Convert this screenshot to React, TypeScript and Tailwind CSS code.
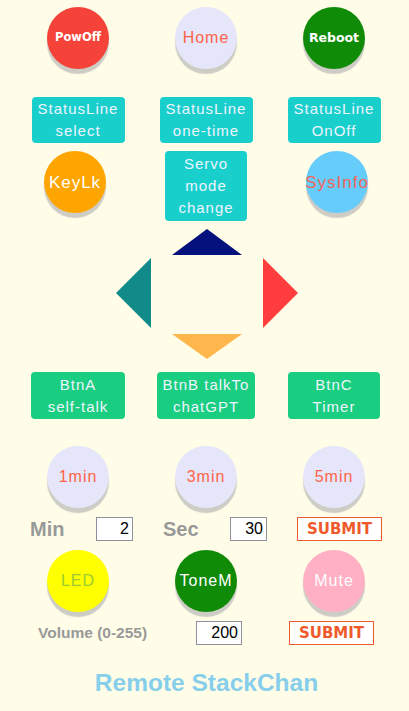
import React from "react";

const sans = "font-['Liberation_Sans',Arial,sans-serif]";
const dejavu = "font-['DejaVu_Sans',Verdana,sans-serif]";

type CircleProps = {
  label: string;
  className: string;
  textClass: string;
};

function Circle({ label, className, textClass }: CircleProps) {
  return (
    <div
      className={`flex h-[62px] w-[62px] items-center justify-center rounded-full shadow-[0_5px_1px_#cdcdc6] ${className}`}
    >
      <span className={`whitespace-nowrap leading-none ${textClass}`}>{label}</span>
    </div>
  );
}

function Box({ lines, className }: { lines: string[]; className: string }) {
  return (
    <div
      className={`flex flex-col items-center justify-center rounded-[4px] ${sans} text-[15px] leading-[22px] tracking-[1px] text-[#eef4ff] ${className}`}
    >
      {lines.map((l) => (
        <span key={l} className="whitespace-nowrap">
          {l}
        </span>
      ))}
    </div>
  );
}

function NumInput({ value, width }: { value: string; width: string }) {
  return (
    <input
      readOnly
      value={value}
      className={`h-[24px] ${width} border border-[#8f8f9d] bg-white px-[3px] text-right ${sans} text-[16px] text-black outline-none`}
    />
  );
}

function Submit() {
  return (
    <button
      className={`flex h-[24px] w-[85px] items-center justify-center border border-[#ee5a2b] bg-white ${dejavu} text-[15px] font-bold text-[#ee5a2b]`}
    >
      SUBMIT
    </button>
  );
}

function Tri({ w, h, points, color }: { w: number; h: number; points: string; color: string }) {
  return (
    <svg width={w} height={h} viewBox={`0 0 ${w} ${h}`} className="block">
      <polygon points={points} fill={color} />
    </svg>
  );
}

export default function App() {
  const light = `${sans} text-[16px] tracking-[1px]`;
  return (
    <div className="min-h-[711px] w-full bg-[#fffde8]">
      <div className="ml-[14px] w-[384px]">
        {/* row 1 */}
        <div className="grid grid-cols-3 justify-items-center pt-[7px]">
          <Circle
            label="PowOff"
            className="bg-[#f5433a]"
            textClass={`${dejavu} text-[11.5px] font-bold text-white`}
          />
          <Circle label="Home" className="bg-[#e6e6fa]" textClass={`${light} text-[#ff6347]`} />
          <Circle
            label="Reboot"
            className="bg-[#108b08]"
            textClass={`${dejavu} text-[12.5px] font-bold text-white`}
          />
        </div>

        {/* status line */}
        <div className="mt-[28px] grid grid-cols-3 justify-items-center">
          <Box lines={["StatusLine", "select"]} className="h-[46px] w-[93px] bg-[#18cfcc]" />
          <Box lines={["StatusLine", "one-time"]} className="h-[46px] w-[93px] bg-[#18cfcc]" />
          <Box lines={["StatusLine", "OnOff"]} className="h-[46px] w-[93px] bg-[#18cfcc]" />
        </div>

        {/* row 3 */}
        <div className="mt-[8px] grid grid-cols-3 items-start justify-items-center">
          <div className="mr-[6px]">
            <Circle
              label="KeyLk"
              className="bg-[#ffa500]"
              textClass={`${sans} text-[17px] tracking-[1px] text-white`}
            />
          </div>
          <Box lines={["Servo", "mode", "change"]} className="h-[70px] w-[82px] bg-[#18cfcc]" />
          <div className="ml-[6px]">
            <Circle
              label="SysInfo"
              className="bg-[#66ccfa]"
              textClass={`${sans} text-[17px] tracking-[1px] text-[#f2665a]`}
            />
          </div>
        </div>
      </div>

      {/* direction pad */}
      <div className="mt-[8px] flex flex-col items-center pl-[4px]">
        <Tri w={70} h={26} points="35,0 70,26 0,26" color="#05117d" />
        <div className="mt-[3px] flex w-[182px] justify-between">
          <Tri w={35} h={70} points="0,35 35,0 35,70" color="#128a8a" />
          <Tri w={35} h={70} points="0,0 35,35 0,70" color="#ff3d3f" />
        </div>
        <div className="mt-[6px]">
          <Tri w={70} h={25} points="0,0 70,0 35,25" color="#ffb74d" />
        </div>
      </div>

      <div className="ml-[14px] w-[384px]">
        {/* buttons */}
        <div className="mt-[13px] grid grid-cols-3 justify-items-center">
          <Box lines={["BtnA", "self-talk"]} className="h-[47px] w-[94px] bg-[#19ce80]" />
          <Box lines={["BtnB talkTo", "chatGPT"]} className="h-[47px] w-[98px] bg-[#19ce80]" />
          <Box lines={["BtnC", "Timer"]} className="h-[47px] w-[92px] bg-[#19ce80]" />
        </div>

        {/* timers */}
        <div className="mt-[27px] grid grid-cols-3 justify-items-center">
          <Circle label="1min" className="bg-[#e6e6fa]" textClass={`${light} text-[#ff6347]`} />
          <Circle label="3min" className="bg-[#e6e6fa]" textClass={`${light} text-[#ff6347]`} />
          <Circle label="5min" className="bg-[#e6e6fa]" textClass={`${light} text-[#ff6347]`} />
        </div>
      </div>

      {/* min / sec */}
      <div className="mt-[9px] flex items-center pl-[30px]">
        <span className={`w-[66px] ${sans} text-[20px] font-bold leading-none text-[#999]`}>Min</span>
        <NumInput value="2" width="w-[37px]" />
        <span className={`ml-[30px] w-[67px] ${sans} text-[20px] font-bold leading-none text-[#999]`}>
          Sec
        </span>
        <NumInput value="30" width="w-[37px]" />
        <div className="ml-[30px]">
          <Submit />
        </div>
      </div>

      <div className="ml-[14px] w-[384px]">
        <div className="mt-[9px] grid grid-cols-3 justify-items-center">
          <Circle label="LED" className="bg-[#ffff00]" textClass={`${light} text-[#9acd32]`} />
          <Circle label="ToneM" className="bg-[#108b08]" textClass={`${light} text-white`} />
          <Circle label="Mute" className="bg-[#ffb0c4]" textClass={`${light} text-white`} />
        </div>
      </div>

      {/* volume */}
      <div className="mt-[9px] flex items-center">
        <span className={`ml-[38px] w-[158px] ${sans} text-[15.5px] font-bold leading-none text-[#999]`}>
          Volume (0-255)
        </span>
        <NumInput value="200" width="w-[46px]" />
        <div className="ml-[47px]">
          <Submit />
        </div>
      </div>

      <div
        className={`mt-[23px] pl-[4px] text-center ${sans} text-[24.5px] font-bold leading-[30px] text-[#87ceeb]`}
      >
        Remote StackChan
      </div>
    </div>
  );
}
